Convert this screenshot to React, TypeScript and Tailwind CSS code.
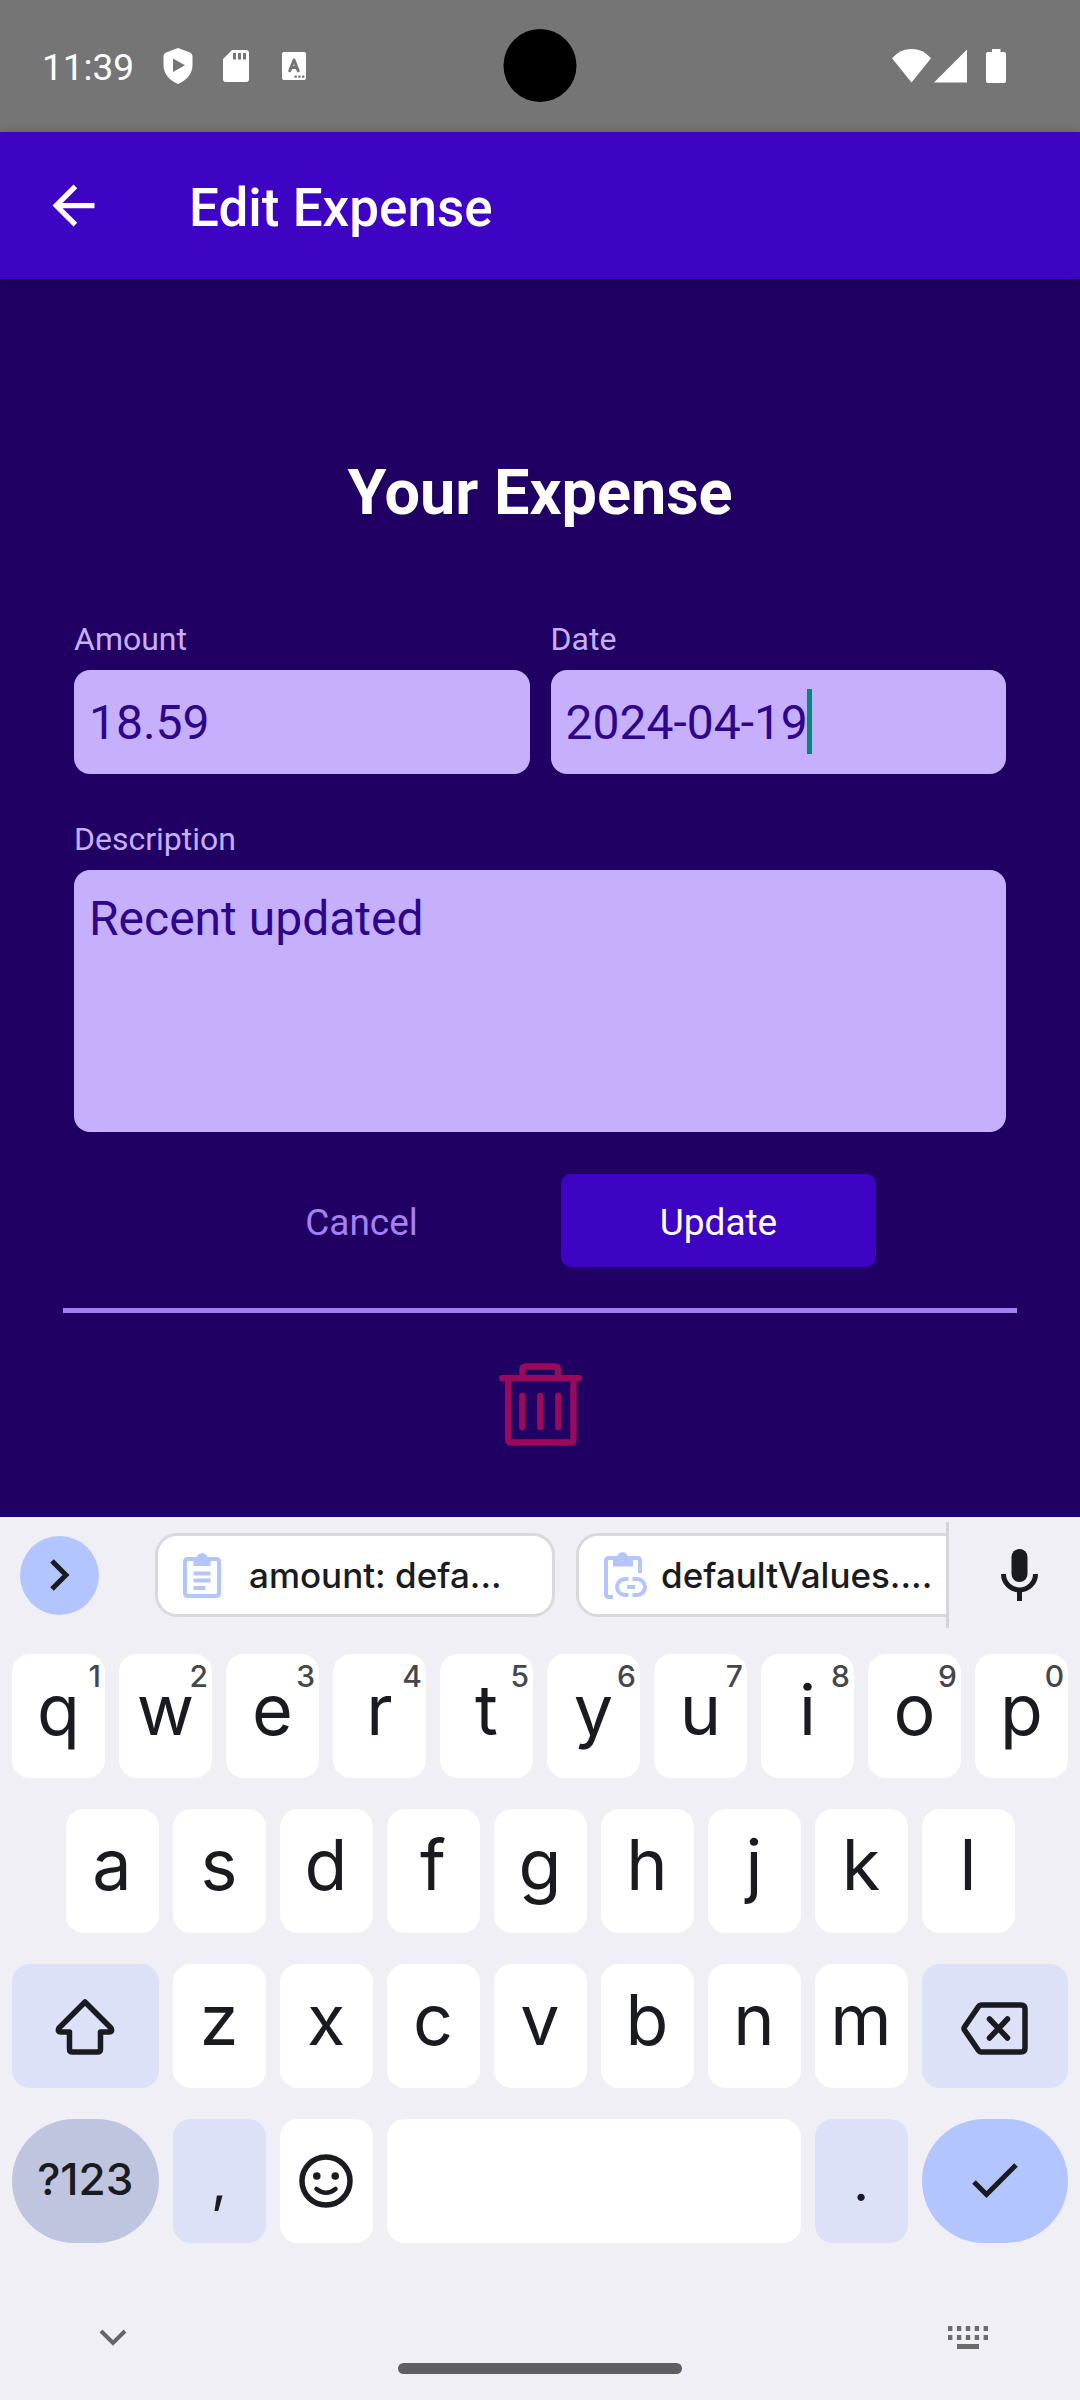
import type { ReactNode } from "react";

function StatusBar() {
  return (
    <div className="relative flex h-[132px] items-center justify-between bg-[#757575] pl-[42px] pr-[74px] text-white">
      <div className="flex items-center">
        <span className="w-[96px] pt-1 text-[37px] leading-[44px]">11:39</span>
        <svg className="ml-[25px] h-[36px] w-[30px]" viewBox="0 0 30 36" fill="currentColor" aria-hidden="true">
          <path fillRule="evenodd" d="M15 0 27 4.500Q29.500 5.500 29.500 8V17C29.500 26 23.500 32.500 15 36 6.500 32.500.500 26 .500 17V8Q.500 5.500 3 4.500ZM10 10.500V24L22 17.200Z" />
        </svg>
        <svg className="ml-[30px] h-[32px] w-[26px]" viewBox="0 0 26 32" fill="currentColor" aria-hidden="true">
          <path fillRule="evenodd" d="M9 0H23Q26 0 26 3V29Q26 32 23 32H3Q0 32 0 29V9ZM10 3V9.500H13V3ZM15 3V9.500H18V3ZM20 3V9.500H23V3Z" />
        </svg>
        <svg className="ml-[33px] h-[28px] w-[24px]" viewBox="0 0 24 28" aria-hidden="true">
          <rect width="24" height="28" rx="2" fill="white" />
          <path d="M7.800 18.800 12 8l4.200 10.800M9.300 15.500h5.400" fill="none" stroke="#757575" strokeWidth="3" strokeLinecap="round" strokeLinejoin="round" />
          <path d="M12.500 23.500h2.300v2.300h-2.300zM16.300 23.500h2.300v2.300h-2.300zM20 23.500h2.300v2.300H20z" fill="#757575" />
        </svg>
      </div>
      <div className="flex items-center">
        <svg className="h-[34px] w-[39px]" viewBox="0 0 39 34" fill="currentColor" aria-hidden="true">
          <path d="M0 9.300Q8 0 19.500 0T39 9.300L19.500 33.500Z" />
        </svg>
        <svg className="ml-[3px] h-[34px] w-[33px]" viewBox="0 0 33 34" fill="currentColor" aria-hidden="true">
          <path d="M33 .500V33.500H0Z" />
        </svg>
        <svg className="ml-[19px] h-[34px] w-[20px]" viewBox="0 0 20 34" fill="currentColor" aria-hidden="true">
          <path d="M6 0H14.500V3H18Q20 3 20 5V32Q20 34 18 34H2Q0 34 0 32V5Q0 3 2 3H6Z" />
        </svg>
      </div>
      <div className="absolute left-1/2 top-[29px] size-[73px] -translate-x-1/2 rounded-full bg-black" />
    </div>
  );
}

function AppHeader() {
  return (
    <header className="relative flex h-[147px] items-center bg-[#3e04c3] pl-[42px] text-white shadow-[0_2px_10px_rgba(0,0,0,0.3)]">
      <button type="button" aria-label="Back" className="size-[63px]">
        <svg className="size-full" viewBox="0 0 24 24" fill="currentColor" aria-hidden="true">
          <path d="M20 11H7.830l5.590-5.590L12 4l-8 8 8 8 1.410-1.410L7.830 13H20v-2z" />
        </svg>
      </button>
      <h1 className="ml-[84px] pt-1 text-[53px] font-medium leading-[62px]">Edit Expense</h1>
    </header>
  );
}

const labelClass = "block text-[32px] leading-[38px] text-[#c6affc]";
const boxClass =
  "block w-full rounded-[16px] bg-[#c6affc] px-[15px] text-[48px] leading-[56px] text-[#2d0689] outline-none";

function ExpenseForm() {
  return (
    <main className="flex-1 bg-[#210063] px-[63px] pb-[71px] pt-[177px]">
      <form className="px-[11px]" onSubmit={(e) => e.preventDefault()}>
        <h2 className="text-center text-[63px] font-bold leading-[74px] text-white">Your Expense</h2>
        <div className="mt-[90px] grid grid-cols-2 gap-[21px]">
          <div>
            <label htmlFor="amount" className={labelClass}>Amount</label>
            <input id="amount" defaultValue="18.59" inputMode="decimal" className={boxClass + " mt-3 h-[104px]"} />
          </div>
          <div>
            <label htmlFor="date" className={labelClass}>Date</label>
            <div className="relative mt-3">
              <input id="date" defaultValue="2024-04-19" className={boxClass + " h-[104px]"} />
              <span className="absolute left-[256px] top-[19px] h-[65px] w-[5px] bg-[#00897b]" />
            </div>
          </div>
        </div>
        <label htmlFor="description" className={labelClass + " mt-[46px]"}>Description</label>
        <textarea id="description" defaultValue="Recent updated" className={boxClass + " mt-3 h-[262px] resize-none pt-[21px]"} />
        <div className="mt-[42px] flex justify-center gap-[42px] text-[37px] leading-[43px]">
          <button type="button" className="h-[93px] w-[315px] rounded-[10px] pt-1 text-[#a281f0]">Cancel</button>
          <button type="submit" className="h-[93px] w-[315px] rounded-[10px] bg-[#3e04c3] pt-1 text-white">Update</button>
        </div>
      </form>
      <div className="mt-[41px] flex justify-center border-t-[5px] border-[#a281f0] pt-[50px]">
        <button type="button" aria-label="Delete expense" className="h-[83px] w-[84px]">
          <svg className="size-full" viewBox="0 0 84 83" fill="none" stroke="#9b095c" strokeWidth="6.400" strokeLinecap="round" strokeLinejoin="round" aria-hidden="true">
            <path d="M4.300 15.200H80.800M10.300 15.200V76.500Q10.300 79.500 13.300 79.500H72.500Q75.500 79.500 75.500 76.500V15.200M24.500 15.200V6.500Q24.500 3.500 28 3.500H56.500Q60 3.500 60 6.500V15.200M24.300 33V64M42.300 33V64M60.300 33V64" />
          </svg>
        </button>
      </div>
    </main>
  );
}

function SuggestionBar() {
  const chip =
    "flex h-[84px] w-[400px] shrink-0 items-center rounded-[22px] border-[3px] border-[#d8d9de] bg-white";
  return (
    <div className="flex h-[106px] items-center">
      <button type="button" aria-label="More tools" className="ml-5 flex size-[79px] shrink-0 items-center justify-center rounded-full bg-[#b2c5ff]">
        <svg className="h-[32px] w-[20px]" viewBox="0 0 20 32" fill="none" stroke="#1a1b20" strokeWidth="5" aria-hidden="true">
          <path d="M2 2 16 16 2 30" />
        </svg>
      </button>
      <div className="ml-[56px] flex min-w-0 flex-1 gap-[21px] overflow-hidden font-medium">
        <button type="button" className={chip + " pl-[25px]"}>
          <svg className="h-[45px] w-[38px]" viewBox="0 0 38 45" aria-hidden="true">
            <path d="M2 9Q2 6 5 6H33Q36 6 36 9V40Q36 43 33 43H5Q2 43 2 40Z" fill="none" stroke="#b2c5ff" strokeWidth="4" />
            <path fillRule="evenodd" d="M10.500 5H13.500C14 -1.500 24 -1.500 24.500 5H27.500V13H10.500ZM19 4A2.200 2.200 0 1 0 19 8.400 2.200 2.200 0 1 0 19 4Z" fill="#b2c5ff" />
            <path d="M10.500 20.500H27.500M10.500 27.500H27.500M10.500 35H22.500" stroke="#b2c5ff" strokeWidth="4" />
          </svg>
          <span className="ml-[28px] whitespace-nowrap text-[35px] leading-[46px]">amount: defa...</span>
        </button>
        <button type="button" className={chip + " pl-[25px]"}>
          <svg className="h-[47px] w-[43px] shrink-0" viewBox="0 0 43 47" fill="none" stroke="#b2c5ff" strokeWidth="4" aria-hidden="true">
            <path d="M36 21V9Q36 6 33 6H5Q2 6 2 9V42Q2 45 5 45H9" />
            <path fillRule="evenodd" d="M9 5H13C14 -1.500 23 -1.500 24 5H29V14.500H9ZM18.700 4A2.200 2.200 0 1 0 18.700 8.400 2.200 2.200 0 1 0 18.700 4Z" fill="#b2c5ff" stroke="none" />
            <path d="M24.500 27H21A8 8 0 0 0 21 43H24.500M28.500 27H33A8 8 0 0 1 33 43H28.500M23 35H31" />
          </svg>
          <span className="ml-[14px] whitespace-nowrap text-[35px] leading-[46px]">defaultValues....</span>
        </button>
      </div>
      <div className="h-full w-[3px] bg-[#d4d5db]" />
      <button type="button" aria-label="Voice input" className="flex w-[131px] shrink-0 items-center justify-center pl-[10px]">
        <svg className="h-[52px] w-[37px]" viewBox="0 0 37 52" aria-hidden="true">
          <rect x="10.500" width="16" height="33" rx="8" fill="#1a1b20" />
          <path d="M2.500 25A16 16 0 0 0 34.500 25M18.500 40V52" fill="none" stroke="#1a1b20" strokeWidth="5" />
        </svg>
      </button>
    </div>
  );
}

function Key({ children, className = "", label }: { children?: ReactNode; className?: string; label?: string }) {
  return (
    <button
      type="button"
      aria-label={label}
      className={"relative flex h-[124px] items-center justify-center " + className}
    >
      {children}
    </button>
  );
}

function Letter({ char, hint, className = "" }: { char: string; hint?: string; className?: string }) {
  return (
    <Key className={"col-span-2 rounded-[18px] bg-white pb-3 text-[70px] leading-[84px] " + className}>
      {char}
      {hint && (
        <span className="absolute right-1 top-1 text-[30px] font-medium leading-[36px] text-[#45464c]">{hint}</span>
      )}
    </Key>
  );
}

const topRow = ["q", "w", "e", "r", "t", "y", "u", "i", "o", "p"];
const homeRow = ["a", "s", "d", "f", "g", "h", "j", "k", "l"];
const bottomRow = ["z", "x", "c", "v", "b", "n", "m"];

function Keyboard() {
  return (
    <section aria-label="Keyboard" className="bg-[#f0eff6] pt-[5px] font-[Inter,sans-serif] text-[#1a1b20]">
      <SuggestionBar />
      <div className="mt-[26px] grid grid-cols-20 gap-x-3.5 gap-y-[31px] px-3">
        {topRow.map((c, i) => (
          <Letter key={c} char={c} hint={String((i + 1) % 10)} />
        ))}
        {homeRow.map((c, i) => (
          <Letter key={c} char={c} className={i === 0 ? "col-start-2" : ""} />
        ))}
        <Key label="Shift" className="col-span-3 col-start-1 rounded-[18px] bg-[#dde1f8]">
          <svg className="h-[57px] w-[60px]" viewBox="0 0 60 57" fill="none" stroke="#1a1b20" strokeWidth="5.500" strokeLinejoin="round" aria-hidden="true">
            <path d="M30 4 56 30Q58 34 54 34H45.500V51Q45.500 54 42.500 54H17.500Q14.500 54 14.500 51V34H6Q2 34 4 30Z" />
          </svg>
        </Key>
        {bottomRow.map((c) => (
          <Letter key={c} char={c} />
        ))}
        <Key label="Backspace" className="col-span-3 rounded-[18px] bg-[#dde1f8] pt-1">
          <svg className="h-[53px] w-[67px]" viewBox="0 0 67 53" fill="none" stroke="#1a1b20" strokeWidth="5.500" strokeLinejoin="round" strokeLinecap="round" aria-hidden="true">
            <path d="M20 3H60Q64 3 64 7V46Q64 50 60 50H20Q18.500 50 17.500 48.500L3.500 28Q2.500 26.500 3.500 25L17.500 4.500Q18.500 3 20 3ZM28.500 17 46.500 36M46.500 17 28.500 36" />
          </svg>
        </Key>
        <Key className="col-span-3 rounded-full bg-[#c0c5df] pb-1 text-[44px] font-medium leading-[56px]">?123</Key>
        <Key className="col-span-2 rounded-[18px] bg-[#dde1f8] text-[56px] leading-[84px]">,</Key>
        <Key label="Emoji" className="col-span-2 rounded-[18px] bg-white">
          <svg className="size-[54px]" viewBox="0 0 54 54" fill="none" stroke="#1a1b20" strokeWidth="5.500" strokeLinecap="round" aria-hidden="true">
            <circle cx="27" cy="27" r="24" />
            <path d="M17.500 35Q27 42.500 36.500 35" strokeWidth="4.500" />
            <circle cx="17.800" cy="22" r="3.800" fill="#1a1b20" stroke="none" />
            <circle cx="36.200" cy="22" r="3.800" fill="#1a1b20" stroke="none" />
          </svg>
        </Key>
        <Key label="Space" className="col-span-8 rounded-[18px] bg-white" />
        <Key className="col-span-2 rounded-[18px] bg-[#dde1f8] text-[56px] leading-[84px]">.</Key>
        <Key label="Done" className="col-span-3 rounded-full bg-[#b2c5ff]">
          <svg className="h-[36px] w-[46px]" viewBox="0 0 46 36" fill="none" stroke="#1a1b20" strokeWidth="5" aria-hidden="true">
            <path d="M2 19 14.500 31.500 44 2" />
          </svg>
        </Key>
      </div>
      <div className="mt-[83px] flex items-start justify-between pl-[99px] pr-[92px]">
        <button type="button" aria-label="Hide keyboard" className="pt-[3px]">
          <svg className="h-[17px] w-[28px]" viewBox="0 0 28 17" fill="none" stroke="#666668" strokeWidth="4" aria-hidden="true">
            <path d="M2 2 14 14 26 2" />
          </svg>
        </button>
        <button type="button" aria-label="Switch keyboard">
          <svg className="h-[23px] w-[40px]" viewBox="0 0 40 23" stroke="#6b6b6e" aria-hidden="true">
            <path d="M0 2.500H40M0 11.500H40" strokeWidth="5" strokeDasharray="4.400 4.500" />
            <path d="M9 20.500H31" strokeWidth="5" />
          </svg>
        </button>
      </div>
      <div className="flex justify-center pb-[26px] pt-[14px]">
        <div className="h-[11px] w-[284px] rounded-full bg-[#5f5f61]" />
      </div>
    </section>
  );
}

export default function App() {
  return (
    <div className="flex min-h-screen flex-col bg-[#f0eff6] font-[Roboto,sans-serif]">
      <StatusBar />
      <AppHeader />
      <ExpenseForm />
      <Keyboard />
    </div>
  );
}
